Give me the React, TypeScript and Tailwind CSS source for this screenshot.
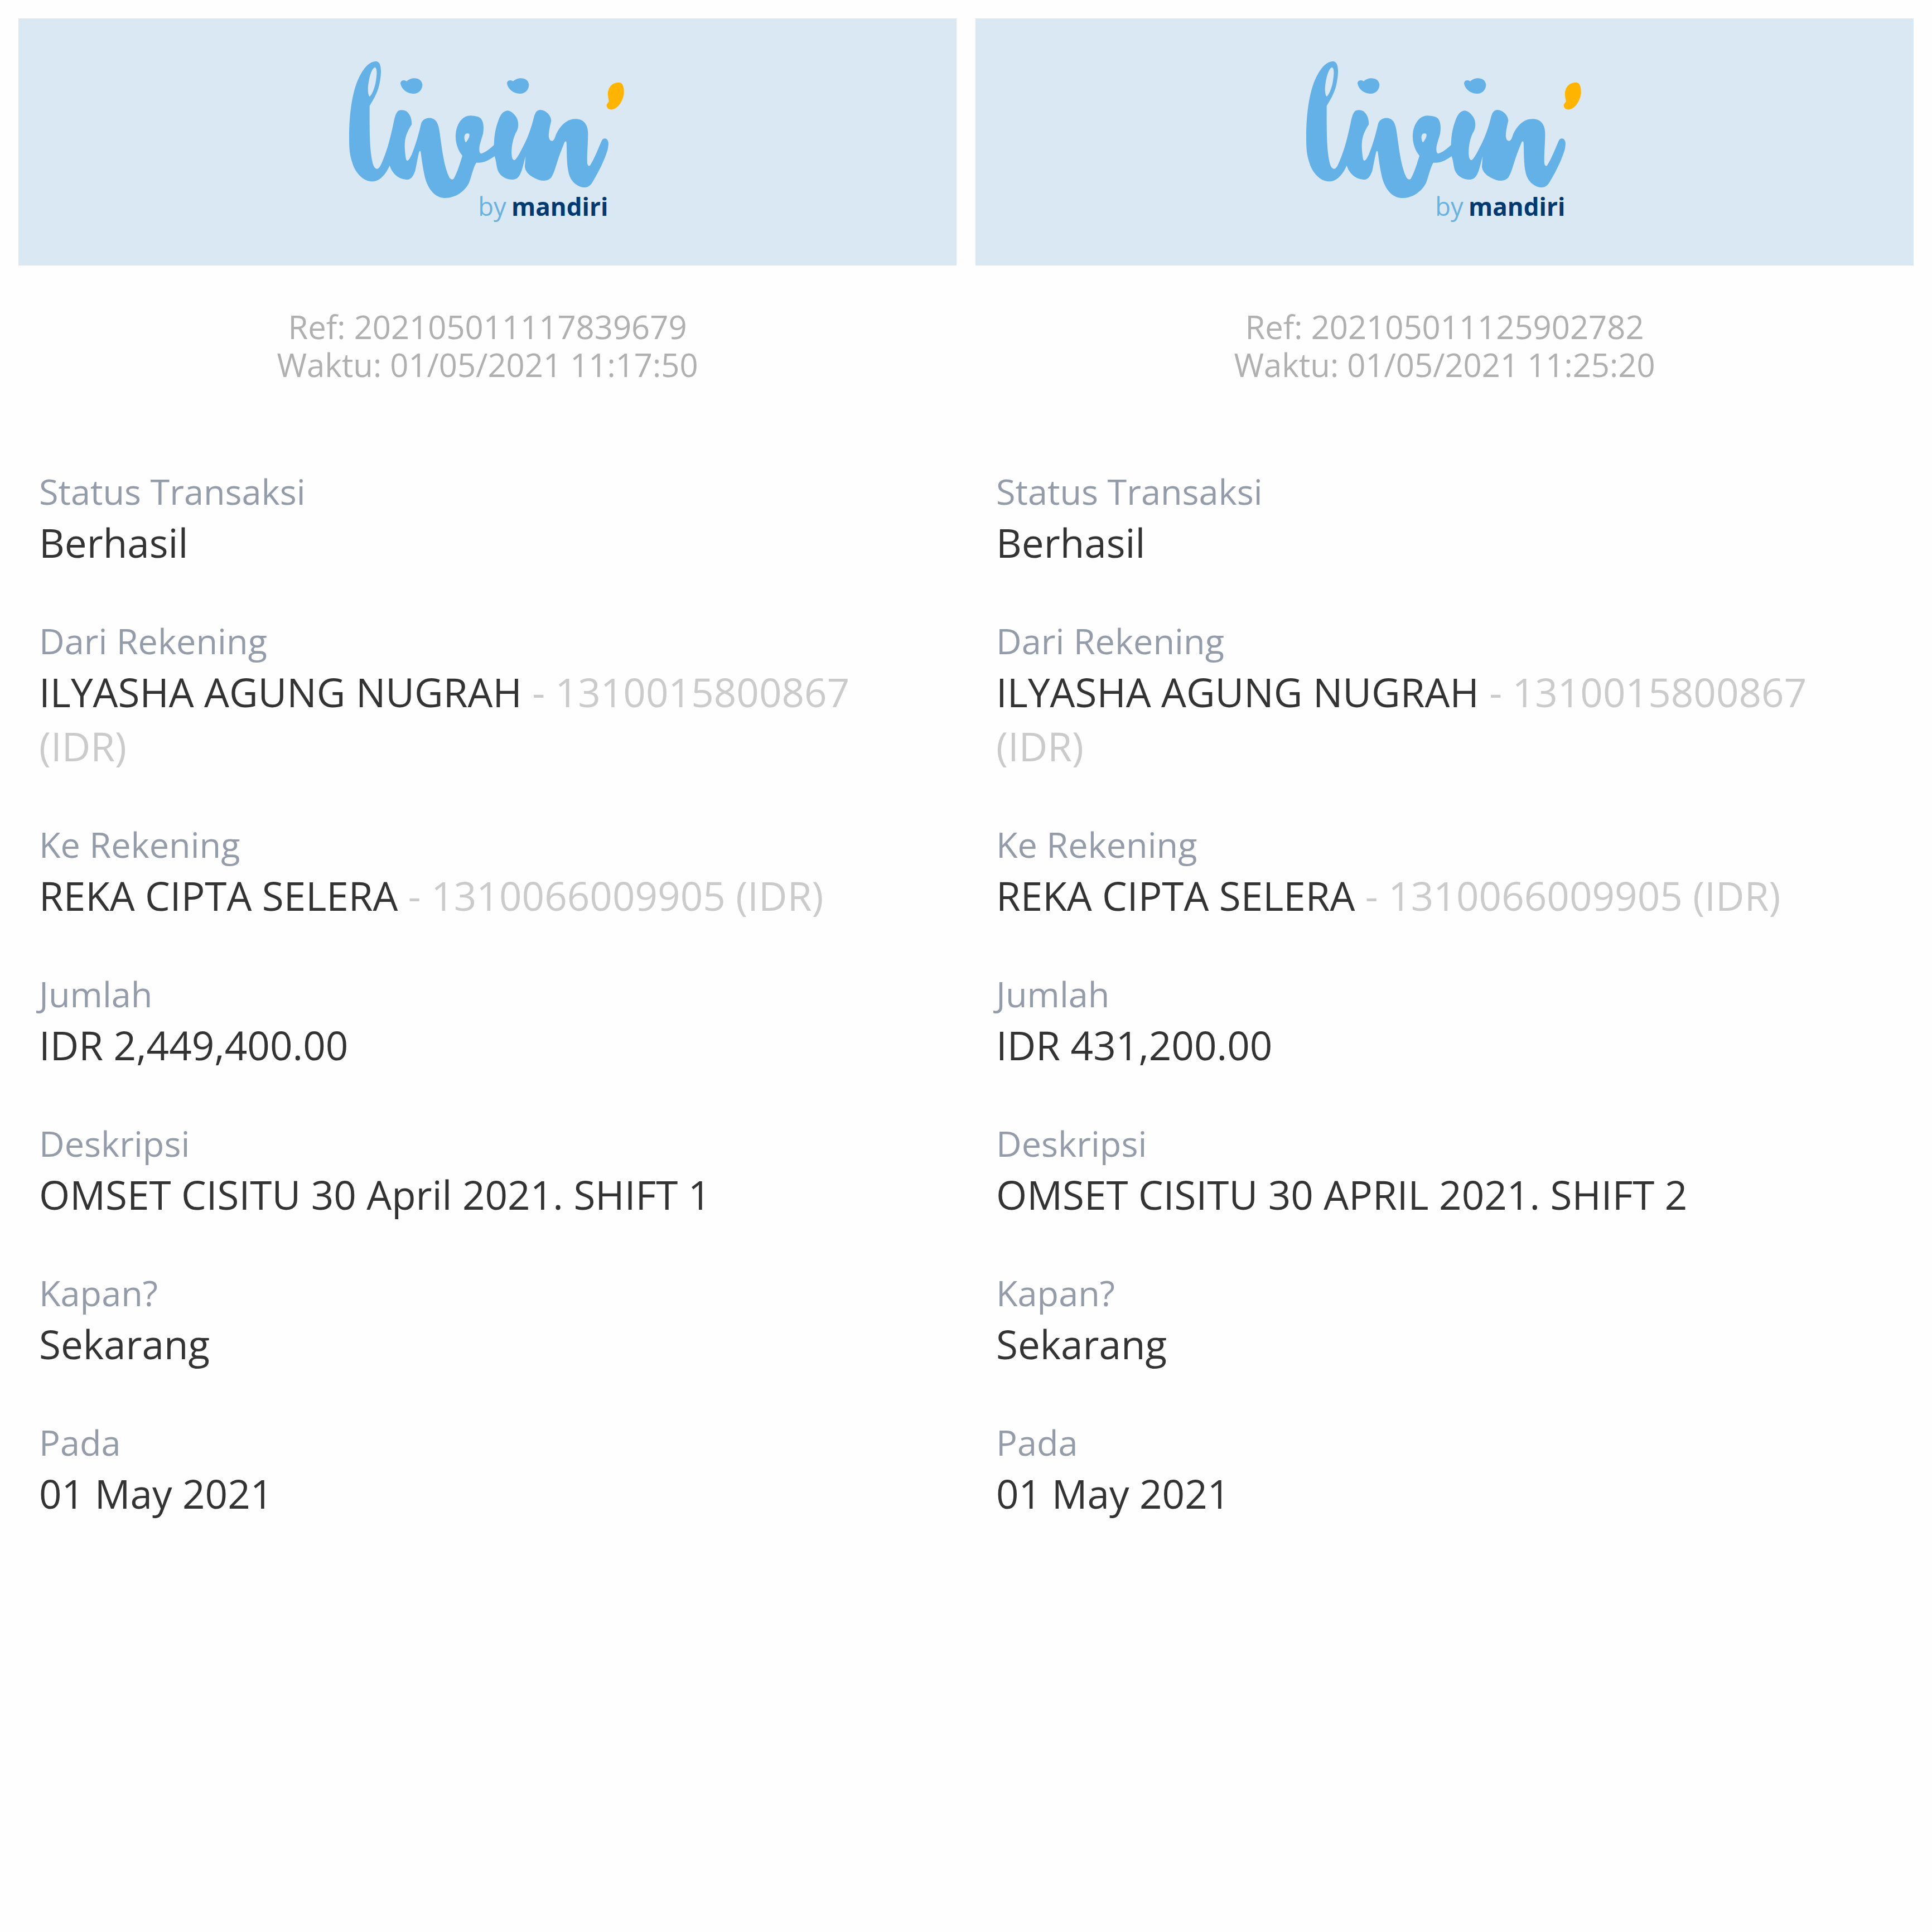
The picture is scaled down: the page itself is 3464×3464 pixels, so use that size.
type Field = { label: string; value: string; account?: string };
type Receipt = { reference: string; time: string; fields: Field[] };

const accounts: Field[] = [
  { label: "Dari Rekening", value: "ILYASHA AGUNG NUGRAH", account: "- 1310015800867 (IDR)" },
  { label: "Ke Rekening", value: "REKA CIPTA SELERA", account: "- 1310066009905 (IDR)" },
];

const schedule: Field[] = [
  { label: "Kapan?", value: "Sekarang" },
  { label: "Pada", value: "01 May 2021" },
];

const receipts: Receipt[] = [
  {
    reference: "202105011117839679",
    time: "01/05/2021 11:17:50",
    fields: [
      { label: "Status Transaksi", value: "Berhasil" },
      ...accounts,
      { label: "Jumlah", value: "IDR 2,449,400.00" },
      { label: "Deskripsi", value: "OMSET CISITU 30 April 2021. SHIFT 1" },
      ...schedule,
    ],
  },
  {
    reference: "202105011125902782",
    time: "01/05/2021 11:25:20",
    fields: [
      { label: "Status Transaksi", value: "Berhasil" },
      ...accounts,
      { label: "Jumlah", value: "IDR 431,200.00" },
      { label: "Deskripsi", value: "OMSET CISITU 30 APRIL 2021. SHIFT 2" },
      ...schedule,
    ],
  },
];

const dot =
  "M387 197C375 189 358 190 354 205C354 225 375 262 424 264C455 263 472 240 472 215C468 190 450 180 425 181C405 182 395 192 387 197Z";

function Logo() {
  return (
    <svg viewBox="0 0 1644 1020" className="h-[340px] w-[548px]" role="img" aria-label="livin' by mandiri">
      <g fill="#64b1e8">
        <path
          fillRule="evenodd"
          d="M222 90C190 92 165 115 140 160C100 230 78 350 78 500C78 570 82 600 100 650C120 700 160 736 203 736C240 736 275 700 296 650C310 695 345 726 395 726C415 722 425 700 433 680C442 640 448 600 455 576C457 571 462 571 463 578C470 630 478 690 492 735C515 795 550 825 595 825C650 825 700 790 722 745C735 715 745 660 762 635C790 637 820 630 860 600C868 620 870 650 877 675C890 710 925 726 955 726C985 726 995 705 1005 680C1015 650 1020 625 1027 600L1023 655C1025 690 1060 715 1100 728C1125 735 1150 733 1165 715C1178 695 1185 670 1193 645C1205 605 1220 565 1237 524C1240 519 1246 519 1247 526C1250 580 1246 640 1260 695C1272 740 1310 768 1347 768C1365 768 1378 755 1388 738C1420 685 1450 625 1467 570C1472 550 1475 530 1470 518C1463 500 1445 502 1438 514C1425 540 1400 610 1375 648C1368 657 1362 652 1359 640C1356 590 1363 540 1363 480C1363 430 1340 400 1295 400C1245 400 1210 440 1190 485C1185 500 1180 518 1168 518C1155 516 1150 500 1152 480C1154 455 1160 430 1165 410C1165 385 1140 352 1105 351C1085 352 1078 370 1072 390C1060 440 1040 500 1015 545C1000 575 985 605 970 620C962 624 955 615 953 600C948 560 958 500 980 465C990 445 990 415 980 395C968 375 950 355 928 355C905 358 890 380 880 410C865 450 858 490 857 540C835 560 815 577 790 586C780 585 778 575 778 560C778 540 790 510 798 480C803 450 802 420 790 402C778 385 755 384 730 382C695 382 672 410 660 440C645 480 648 530 670 572C675 583 683 590 687 598C675 635 660 690 640 722C633 728 625 726 617 715C590 660 580 580 570 510C563 460 562 440 548 415C535 395 515 393 500 395C480 400 468 410 464 430C450 490 435 540 415 590C405 612 397 624 390 624C383 622 382 605 380 590C375 550 375 510 390 475C398 455 408 440 415 429C414 400 408 375 385 358C370 350 350 350 340 358C325 375 322 400 316 425C300 500 285 560 260 620C250 645 240 668 228 668C215 668 207 650 203 630C188 560 188 480 188 330C215 285 235 250 243 200C250 165 252 130 243 105C238 95 230 90 222 90ZM216 122C200 128 190 165 184 195C178 225 176 265 188 280C205 265 220 220 224 180C228 150 228 125 216 122ZM712 478C700 478 695 495 699 510C700 518 703 524 706 526C715 515 726 500 725 485C724 478 718 477 712 478Z"
        />
        <path d={dot} />
        <path d={dot} transform="translate(573 0)" />
      </g>
      <path
        fill="#ffb400"
        d="M1522 204C1495 206 1475 225 1470 255C1468 275 1473 290 1475 305C1473 312 1462 318 1463 328C1465 345 1480 352 1495 349C1530 340 1550 300 1556 265C1558 235 1551 212 1540 206C1535 204 1529 204 1522 204Z"
      />
      <text x="772" y="920" fill="#6bb1e0" fontSize="136">
        by
      </text>
      <text x="951" y="920" fill="#003a70" fontSize="132" fontWeight="700">
        mandiri
      </text>
    </svg>
  );
}

function ReceiptCard({ reference, time, fields }: Receipt) {
  return (
    <article className="min-w-0 flex-1">
      <header className="flex justify-center bg-[#dae8f3] pt-[47px] pb-14">
        <Logo />
      </header>
      <div className="pt-[76px] text-center text-[58px] leading-[68px] text-[#b0b0b0]">
        <p>Ref: {reference}</p>
        <p>Waktu: {time}</p>
      </div>
      <dl className="flex flex-col gap-[85px] px-[37px] pt-[150px]">
        {fields.map(({ label, value, account }) => (
          <div key={label}>
            <dt className="text-[63px] leading-[86px] text-[#959ca9]">{label}</dt>
            <dd className="text-[71px] leading-[97px] text-[#333333]">
              {value}
              {account && <span className="text-[#cbcbcb]"> {account}</span>}
            </dd>
          </div>
        ))}
      </dl>
    </article>
  );
}

export default function App() {
  return (
    <main className="flex min-h-screen gap-[34px] bg-[#fefefe] p-[33px] font-['Open_Sans',sans-serif]">
      {receipts.map((receipt) => (
        <ReceiptCard key={receipt.reference} {...receipt} />
      ))}
    </main>
  );
}
